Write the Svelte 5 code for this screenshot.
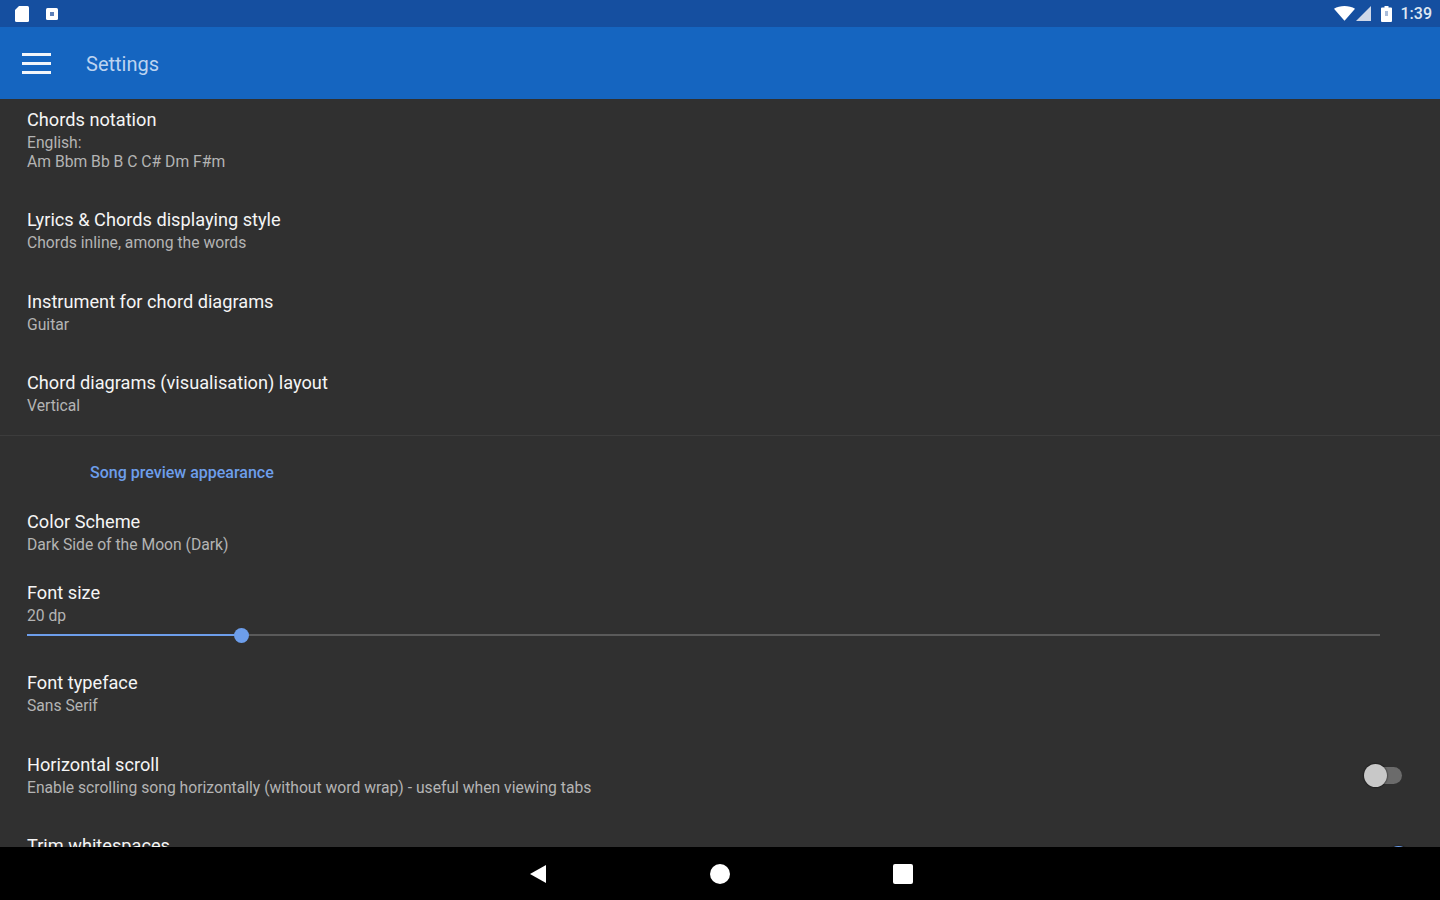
<script>
    const top = [
        { title: 'Lyrics & Chords displaying style', sub: 'Chords inline, among the words' },
        { title: 'Instrument for chord diagrams', sub: 'Guitar' },
        { title: 'Chord diagrams (visualisation) layout', sub: 'Vertical', last: true }
    ];
    const fontSize = 20;
    const sliderPct = 15.85;
</script>

<div class="screen">
    <div class="statusbar">
        <div class="status-left">
            <svg width="16" height="18" viewBox="0 0 16 18"><path d="M5 1h8.500A1.500 1.500 0 0 1 15 2.500v13a1.500 1.500 0 0 1-1.500 1.500h-11A1.500 1.500 0 0 1 1 15.500V5z" fill="#fff"/></svg>
            <svg width="14" height="14" viewBox="0 0 14 14"><rect x="1" y="1" width="12" height="12" rx="1.500" fill="#fff"/><rect x="5" y="5" width="4" height="4" fill="#5d7fb8"/></svg>
        </div>
        <div class="status-right">
            <svg width="21" height="15" viewBox="0 0 20 14"><path d="M0 2.500C5.500-1 14.500-1 20 2.500L10 14z" fill="#fff"/></svg>
            <svg class="signal" width="15" height="15" viewBox="0 0 14 14"><path d="M14 0v14H0z" fill="#cfd8e8"/></svg>
            <svg class="batt" width="11" height="18" viewBox="0 0 11 16"><path d="M3.500 0h4v1.500H10a1 1 0 0 1 1 1V15a1 1 0 0 1-1 1H1a1 1 0 0 1-1-1V2.500a1 1 0 0 1 1-1h2.500z" fill="#fff"/><rect x="4" y="5" width="3" height="5" fill="#a9bcd9"/></svg>
            <span class="clock">1:39</span>
        </div>
    </div>

    <header class="appbar">
        <div class="burger"><span></span><span></span><span></span></div>
        <div class="appbar-title">Settings</div>
    </header>

    <main class="content">
        <div class="pref first">
            <div class="title">Chords notation</div>
            <div class="sub">English:</div>
            <div class="sub next">Am Bbm Bb B C C# Dm F#m</div>
        </div>

        {#each top as p}
            <div class="pref" class:last={p.last}>
                <div class="title">{p.title}</div>
                <div class="sub">{p.sub}</div>
            </div>
        {/each}

        <div class="divider"></div>
        <div class="section">Song preview appearance</div>

        <div class="pref tight">
            <div class="title">Color Scheme</div>
            <div class="sub">Dark Side of the Moon (Dark)</div>
        </div>

        <div class="pref slider-pref">
            <div class="title">Font size</div>
            <div class="sub">{fontSize} dp</div>
            <div class="track">
                <div class="fill" style="width: {sliderPct}%"></div>
                <div class="thumb" style="left: {sliderPct}%"></div>
            </div>
        </div>

        <div class="pref">
            <div class="title">Font typeface</div>
            <div class="sub">Sans Serif</div>
        </div>

        <div class="pref with-switch">
            <div>
                <div class="title">Horizontal scroll</div>
                <div class="sub">Enable scrolling song horizontally (without word wrap) - useful when viewing tabs</div>
            </div>
            <div class="switch"><div class="knob"></div></div>
        </div>

        <div class="pref with-switch">
            <div class="title">Trim whitespaces</div>
            <div class="switch on"><div class="knob"></div></div>
        </div>
    </main>

    <nav class="navbar">
        <svg width="18" height="20" viewBox="0 0 18 20"><path d="M17 1v18L1 10z" fill="#fff"/></svg>
        <svg width="20" height="20" viewBox="0 0 20 20"><circle cx="10" cy="10" r="10" fill="#fff"/></svg>
        <svg width="20" height="20" viewBox="0 0 20 20"><rect width="20" height="20" rx="2" fill="#fff"/></svg>
    </nav>
</div>

<style>
    :global(body) {
        margin: 0;
        background: #000;
    }

    .screen {
        width: 1440px;
        height: 900px;
        display: flex;
        flex-direction: column;
        overflow: hidden;
        font-family: Roboto, "Liberation Sans", sans-serif;
    }

    .statusbar {
        height: 27px;
        flex: none;
        background: #154fa0;
        display: flex;
        align-items: center;
        justify-content: space-between;
        padding: 0 8px 0 14px;
    }

    .status-left {
        display: flex;
        align-items: center;
        gap: 15px;
    }

    .status-right {
        display: flex;
        align-items: center;
        color: #dfe7f3;
        font-size: 16px;
        font-weight: 500;
    }

    .status-right .signal {
        margin-left: 1px;
    }

    .status-right .batt {
        margin: 0 9px 0 10px;
    }

    .appbar {
        height: 72px;
        flex: none;
        background: #1565c0;
        display: flex;
        align-items: center;
        padding-left: 22px;
    }

    .burger {
        width: 29px;
        display: flex;
        flex-direction: column;
        gap: 6px;
        margin-right: 35px;
    }

    .burger span {
        height: 3px;
        background: #f2f6fb;
    }

    .appbar-title {
        color: #bcd3f0;
        font-size: 20px;
        padding-top: 2px;
    }

    .content {
        flex: 1;
        min-height: 0;
        overflow: hidden;
        background: #303030;
    }

    .pref {
        padding: 10px 38px 28.5px 27px;
    }

    .pref.first {
        padding-bottom: 28px;
    }

    .pref.last {
        padding-bottom: 20px;
    }

    .pref.tight {
        padding-bottom: 18px;
    }

    .pref.slider-pref {
        padding: 10px 60px 26px 27px;
    }

    .title {
        font-size: 18.2px;
        line-height: 22px;
        color: #f5f5f5;
    }

    .sub {
        font-size: 15.7px;
        line-height: 19px;
        margin-top: 2px;
        color: #b4b4b4;
    }

    .sub.next {
        margin-top: 0;
    }

    .divider {
        height: 1px;
        background: #3c3c3c;
    }

    .section {
        color: #6d9eeb;
        font-size: 16px;
        font-weight: 500;
        line-height: 20px;
        padding: 26.5px 0 18.5px 90px;
    }

    .track {
        position: relative;
        height: 2px;
        margin-top: 9px;
        background: #5a5a5a;
    }

    .fill {
        height: 100%;
        background: #6d9eeb;
    }

    .thumb {
        position: absolute;
        top: -6.5px;
        width: 15px;
        height: 15px;
        margin-left: -7.5px;
        border-radius: 50%;
        background: #6d9eeb;
    }

    .with-switch {
        display: flex;
        justify-content: space-between;
        align-items: flex-start;
    }

    .switch {
        position: relative;
        width: 34px;
        height: 17px;
        margin-top: 13px;
        border-radius: 9px;
        background: #6b6b6b;
    }

    .knob {
        position: absolute;
        top: -3px;
        left: -4px;
        width: 23px;
        height: 23px;
        border-radius: 50%;
        background: #c8c8c8;
        box-shadow: 0 0 2px #000;
    }

    .switch.on .knob {
        top: -2px;
        left: auto;
        right: -8px;
        background: #6d9eeb;
    }

    .navbar {
        height: 53px;
        flex: none;
        background: #000;
        display: flex;
        align-items: center;
        justify-content: center;
        gap: 163px;
        padding-left: 1px;
    }
</style>
